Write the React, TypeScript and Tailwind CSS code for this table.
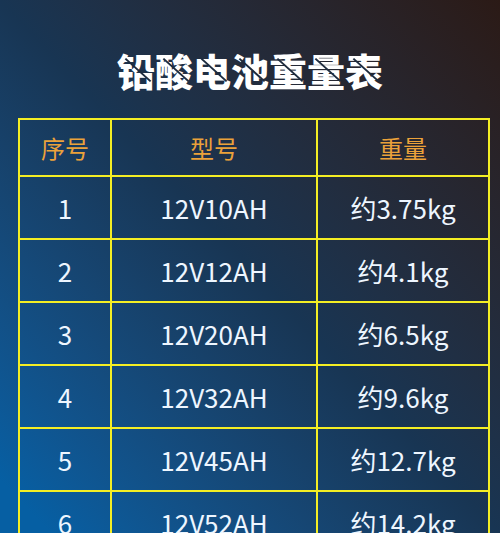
const rows = [
  { no: "1", model: "12V10AH", weight: "约3.75kg" },
  { no: "2", model: "12V12AH", weight: "约4.1kg" },
  { no: "3", model: "12V20AH", weight: "约6.5kg" },
  { no: "4", model: "12V32AH", weight: "约9.6kg" },
  { no: "5", model: "12V45AH", weight: "约12.7kg" },
  { no: "6", model: "12V52AH", weight: "约14.2kg" },
];

const title = "铅酸电池重量表".split("");

export default function App() {
  const cell = "border-2 border-[#f4ee24] text-center align-middle";

  return (
    <div
      className="h-[533px] w-[500px] overflow-hidden bg-linear-to-tr from-[#065fa3] from-5% via-[#183553] via-50% to-[#2b1a16]"
      style={{ fontFamily: '"Noto Sans CJK SC", "Noto Sans", sans-serif' }}
    >
      {/* Title */}
      <div className="flex h-[118px] items-center justify-center pt-[22px]">
        <h1 className="m-0 flex text-[38px] font-black leading-none text-white">
          {title.map((ch, i) => (
            <span key={i} className="relative inline-block">
              {ch}
              <span className="absolute left-[4px] top-1/2 h-[2px] w-[34px] -translate-y-1/2 rotate-[42deg] bg-[#1d2b3e]" />
            </span>
          ))}
        </h1>
      </div>

      {/* Table */}
      <div className="pl-[18px]">
        <table className="w-[470px] table-fixed border-collapse">
          <colgroup>
            <col className="w-[92px]" />
            <col className="w-[206px]" />
            <col className="w-[172px]" />
          </colgroup>
          <thead>
            <tr className="h-[57px] text-[24px] text-[#eba23a]">
              <th className={`${cell} font-normal`}>序号</th>
              <th className={`${cell} font-normal`}>型号</th>
              <th className={`${cell} font-normal`}>重量</th>
            </tr>
          </thead>
          <tbody>
            {rows.map((r) => (
              <tr key={r.no} className="h-[63px] text-[26px] text-[#eef6ff]">
                <td className={cell}>{r.no}</td>
                <td className={cell}>{r.model}</td>
                <td className={cell}>{r.weight}</td>
              </tr>
            ))}
          </tbody>
        </table>
      </div>
    </div>
  );
}
